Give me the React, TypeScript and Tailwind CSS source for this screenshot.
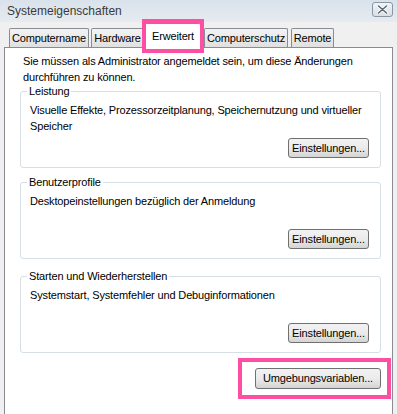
import React from 'react';

const font = { fontFamily: '"Liberation Sans", Arial, sans-serif' };

interface TabProps {
  label: string;
  width: string;
  active?: boolean;
}

const Tab: React.FC<TabProps> = ({ label, width, active }) => {
  if (active) {
    return (
      <div
        className={`${width} h-[25px] -mb-[1px] relative z-10 bg-white border border-b-0 border-[#898c95] rounded-t-[2px] flex items-start justify-center pt-[4px] text-black`}
      >
        {label}
      </div>
    );
  }
  return (
    <div
      className={`${width} h-[19px] bg-gradient-to-b from-[#f3f3f3] to-[#e0e0e0] border border-b-0 border-[#898c95] rounded-t-[2px] flex items-center justify-center pt-[1px] text-black`}
    >
      {label}
    </div>
  );
};

const WinButton: React.FC<{ label: string; className?: string }> = ({ label, className = '' }) => (
  <button
    className={`h-[20px] rounded-[3px] border border-[#707070] bg-gradient-to-b from-[#f2f2f2] via-[#ebebeb] to-[#d4d4d4] text-black leading-none flex items-center justify-center ${className}`}
  >
    {label}
  </button>
);

interface GroupProps {
  title: string;
  lines: string[];
  className?: string;
}

// group box with legend cut into the border
const Group: React.FC<GroupProps> = ({ title, lines, className = '' }) => (
  <fieldset className={`border border-[#d5dfe5] rounded-[3px] ml-[15px] mr-[11px] ${className}`}>
    <legend className="ml-[6px] px-[2px] leading-[14px] text-black">{title}</legend>
    <div className="h-[69px] flex flex-col pt-[4px] pl-[9px] pr-[11px] pb-[9px]">
      {lines.map((l, i) => (
        <div key={i} className="leading-[16px]">
          {l}
        </div>
      ))}
      <WinButton label="Einstellungen..." className="w-[81px] mt-auto self-end" />
    </div>
  </fieldset>
);

export default function App() {
  return (
    <div
      className="relative w-[397px] h-[414px] overflow-hidden bg-[#f0f0f0] text-[11px] tracking-[-0.15px] text-black"
      style={font}
    >
      {/* title bar */}
      <div className="h-[22px] flex items-center justify-between bg-gradient-to-b from-[#d9e2eb] to-[#e6ebf0]">
        <span className="ml-[7px] text-[12px] text-[#3a3a3a] tracking-normal">Systemeigenschaften</span>
        <div className="self-start mr-[4px] mt-[2px] w-[21px] h-[15px] rounded-[3px] border border-[#8b96a3] bg-gradient-to-b from-[#f1f4f7] to-[#d9dfe6] flex items-center justify-center">
          <svg width="11" height="9" viewBox="0 0 11 9">
            <path d="M1.5 1 L9.5 8 M9.5 1 L1.5 8" stroke="#ffffff" strokeWidth="3.2" strokeLinecap="round" />
            <path d="M1.5 1 L9.5 8 M9.5 1 L1.5 8" stroke="#5d6670" strokeWidth="1.6" strokeLinecap="round" />
          </svg>
        </div>
      </div>

      {/* tabs */}
      <div className="h-[25px] flex items-end pl-[9px] relative z-10">
        <Tab label="Computername" width="w-[80px]" />
        <div className="ml-[2px]">
          <Tab label="Hardware" width="w-[53px]" />
        </div>
        <div className="ml-[1px]">
          <Tab label="Erweitert" width="w-[56px]" active />
        </div>
        <div className="ml-[3px]">
          <Tab label="Computerschutz" width="w-[84px]" />
        </div>
        <div className="ml-[3px]">
          <Tab label="Remote" width="w-[43px]" />
        </div>
      </div>

      {/* tab page */}
      <div className="ml-[4px] w-[389px] h-[380px] bg-white border border-[#898c95] pt-[5px]">
        <div className="pl-[18px] leading-[16px]">
          <div>Sie müssen als Administrator angemeldet sein, um diese Änderungen</div>
          <div>durchführen zu können.</div>
        </div>

        <div className="mt-[-1px] flex flex-col gap-[7px]">
          <Group
            title="Leistung"
            lines={['Visuelle Effekte, Prozessorzeitplanung, Speichernutzung und virtueller', 'Speicher']}
          />
          <Group title="Benutzerprofile" lines={['Desktopeinstellungen bezüglich der Anmeldung']} />
          <Group
            title="Starten und Wiederherstellen"
            lines={['Systemstart, Systemfehler und Debuginformationen']}
            className="mt-[3px]"
          />
        </div>

        <div className="flex justify-end pr-[11px] mt-[15px]">
          <WinButton label="Umgebungsvariablen..." className="w-[126px] h-[21px]" />
        </div>
      </div>

      {/* pink annotation boxes */}
      <div className="absolute left-[142px] top-[19px] w-[62px] h-[34px] border-[4px] border-[#ff4fa3] z-20" />
      <div className="absolute left-[238px] top-[358px] w-[153px] h-[41px] border-[4px] border-[#ff4fa3] z-20" />
    </div>
  );
}
